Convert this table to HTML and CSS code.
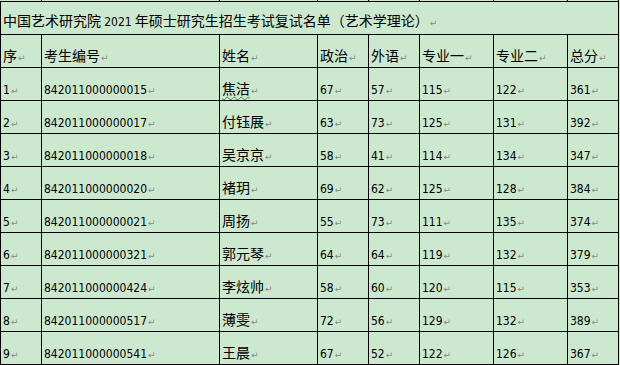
FILE: index.html
```html
<!DOCTYPE html>
<html lang="zh-CN">
<head>
<meta charset="utf-8">
<link rel="stylesheet" href="styles.css">
</head>
<body>
<table class="sheet">
  <colgroup>
    <col class="c-seq"><col class="c-id"><col class="c-name"><col class="c-s"><col class="c-s"><col class="c-m"><col class="c-m"><col class="c-s">
  </colgroup>
  <tr class="stub"><td class="nl"></td><td></td><td></td><td></td><td></td><td></td><td></td><td></td></tr>
  <tr><td colspan="8" class="title">中国艺术研究院 <span class="num">2021</span> 年硕士研究生招生考试复试名单（艺术学理论）<span class="pm">↵</span></td></tr>
  <tr class="head">
    <td>序<span class="pm">↵</span></td>
    <td>考生编号<span class="pm">↵</span></td>
    <td>姓名<span class="pm">↵</span></td>
    <td>政治<span class="pm">↵</span></td>
    <td>外语<span class="pm">↵</span></td>
    <td>专业一<span class="pm">↵</span></td>
    <td>专业二<span class="pm">↵</span></td>
    <td>总分<span class="pm">↵</span></td>
  </tr>
  <tr><td><span class="num">1</span><span class="pm">↵</span></td><td><span class="num">842011000000015</span><span class="pm">↵</span></td><td><span class="spell">焦洁</span><span class="pm">↵</span></td><td><span class="num">67</span><span class="pm">↵</span></td><td><span class="num">57</span><span class="pm">↵</span></td><td><span class="num">115</span><span class="pm">↵</span></td><td><span class="num">122</span><span class="pm">↵</span></td><td><span class="num">361</span><span class="pm">↵</span></td></tr>
  <tr><td><span class="num">2</span><span class="pm">↵</span></td><td><span class="num">842011000000017</span><span class="pm">↵</span></td><td>付钰展<span class="pm">↵</span></td><td><span class="num">63</span><span class="pm">↵</span></td><td><span class="num">73</span><span class="pm">↵</span></td><td><span class="num">125</span><span class="pm">↵</span></td><td><span class="num">131</span><span class="pm">↵</span></td><td><span class="num">392</span><span class="pm">↵</span></td></tr>
  <tr><td><span class="num">3</span><span class="pm">↵</span></td><td><span class="num">842011000000018</span><span class="pm">↵</span></td><td>吴京京<span class="pm">↵</span></td><td><span class="num">58</span><span class="pm">↵</span></td><td><span class="num">41</span><span class="pm">↵</span></td><td><span class="num">114</span><span class="pm">↵</span></td><td><span class="num">134</span><span class="pm">↵</span></td><td><span class="num">347</span><span class="pm">↵</span></td></tr>
  <tr><td><span class="num">4</span><span class="pm">↵</span></td><td><span class="num">842011000000020</span><span class="pm">↵</span></td><td>褚玥<span class="pm">↵</span></td><td><span class="num">69</span><span class="pm">↵</span></td><td><span class="num">62</span><span class="pm">↵</span></td><td><span class="num">125</span><span class="pm">↵</span></td><td><span class="num">128</span><span class="pm">↵</span></td><td><span class="num">384</span><span class="pm">↵</span></td></tr>
  <tr><td><span class="num">5</span><span class="pm">↵</span></td><td><span class="num">842011000000021</span><span class="pm">↵</span></td><td>周扬<span class="pm">↵</span></td><td><span class="num">55</span><span class="pm">↵</span></td><td><span class="num">73</span><span class="pm">↵</span></td><td><span class="num">111</span><span class="pm">↵</span></td><td><span class="num">135</span><span class="pm">↵</span></td><td><span class="num">374</span><span class="pm">↵</span></td></tr>
  <tr><td><span class="num">6</span><span class="pm">↵</span></td><td><span class="num">842011000000321</span><span class="pm">↵</span></td><td>郭元琴<span class="pm">↵</span></td><td><span class="num">64</span><span class="pm">↵</span></td><td><span class="num">64</span><span class="pm">↵</span></td><td><span class="num">119</span><span class="pm">↵</span></td><td><span class="num">132</span><span class="pm">↵</span></td><td><span class="num">379</span><span class="pm">↵</span></td></tr>
  <tr><td><span class="num">7</span><span class="pm">↵</span></td><td><span class="num">842011000000424</span><span class="pm">↵</span></td><td>李炫帅<span class="pm">↵</span></td><td><span class="num">58</span><span class="pm">↵</span></td><td><span class="num">60</span><span class="pm">↵</span></td><td><span class="num">120</span><span class="pm">↵</span></td><td><span class="num">115</span><span class="pm">↵</span></td><td><span class="num">353</span><span class="pm">↵</span></td></tr>
  <tr><td><span class="num">8</span><span class="pm">↵</span></td><td><span class="num">842011000000517</span><span class="pm">↵</span></td><td>薄雯<span class="pm">↵</span></td><td><span class="num">72</span><span class="pm">↵</span></td><td><span class="num">56</span><span class="pm">↵</span></td><td><span class="num">129</span><span class="pm">↵</span></td><td><span class="num">132</span><span class="pm">↵</span></td><td><span class="num">389</span><span class="pm">↵</span></td></tr>
  <tr><td><span class="num">9</span><span class="pm">↵</span></td><td><span class="num">842011000000541</span><span class="pm">↵</span></td><td>王晨<span class="pm">↵</span></td><td><span class="num">67</span><span class="pm">↵</span></td><td><span class="num">52</span><span class="pm">↵</span></td><td><span class="num">122</span><span class="pm">↵</span></td><td><span class="num">126</span><span class="pm">↵</span></td><td><span class="num">367</span><span class="pm">↵</span></td></tr>
</table>
</body>
</html>
```
FILE: styles.css
```css
html, body {
  margin: 0;
  padding: 0;
  background: #cce8cf;
}
body {
  font-family: "Noto Sans CJK SC", sans-serif;
  font-size: 14px;
  color: #000;
}
.sheet {
  border-collapse: collapse;
  table-layout: fixed;
  width: 619px;
}
.c-seq { width: 41px; }
.c-id { width: 178px; }
.c-name { width: 98px; }
.c-s { width: 51px; }
.c-m { width: 74px; }
.sheet td {
  border: 1px solid #000;
  height: 33px;
  box-sizing: border-box;
  padding: 0 0 1px 2px;
  vertical-align: bottom;
  line-height: 16px;
  white-space: nowrap;
  overflow: hidden;
}
.sheet tr.stub td {
  height: 1px;
  padding: 0;
  border-top: none;
  line-height: 0;
  font-size: 0;
}
.sheet tr.stub td.nl {
  border-left: none;
}
.sheet td.title {
  padding-bottom: 3px;
}
.num {
  font-family: "DejaVu Sans Condensed", "DejaVu Sans", sans-serif;
  font-stretch: condensed;
  font-size: 12px;
}
.pm {
  font-family: "DejaVu Sans", sans-serif;
  font-size: 9px;
  color: #8a8a8a;
  margin-left: 1px;
}
.spell {
  text-decoration: underline wavy #2e9a2e;
  text-decoration-thickness: 1px;
  text-underline-offset: 2px;
}
```
